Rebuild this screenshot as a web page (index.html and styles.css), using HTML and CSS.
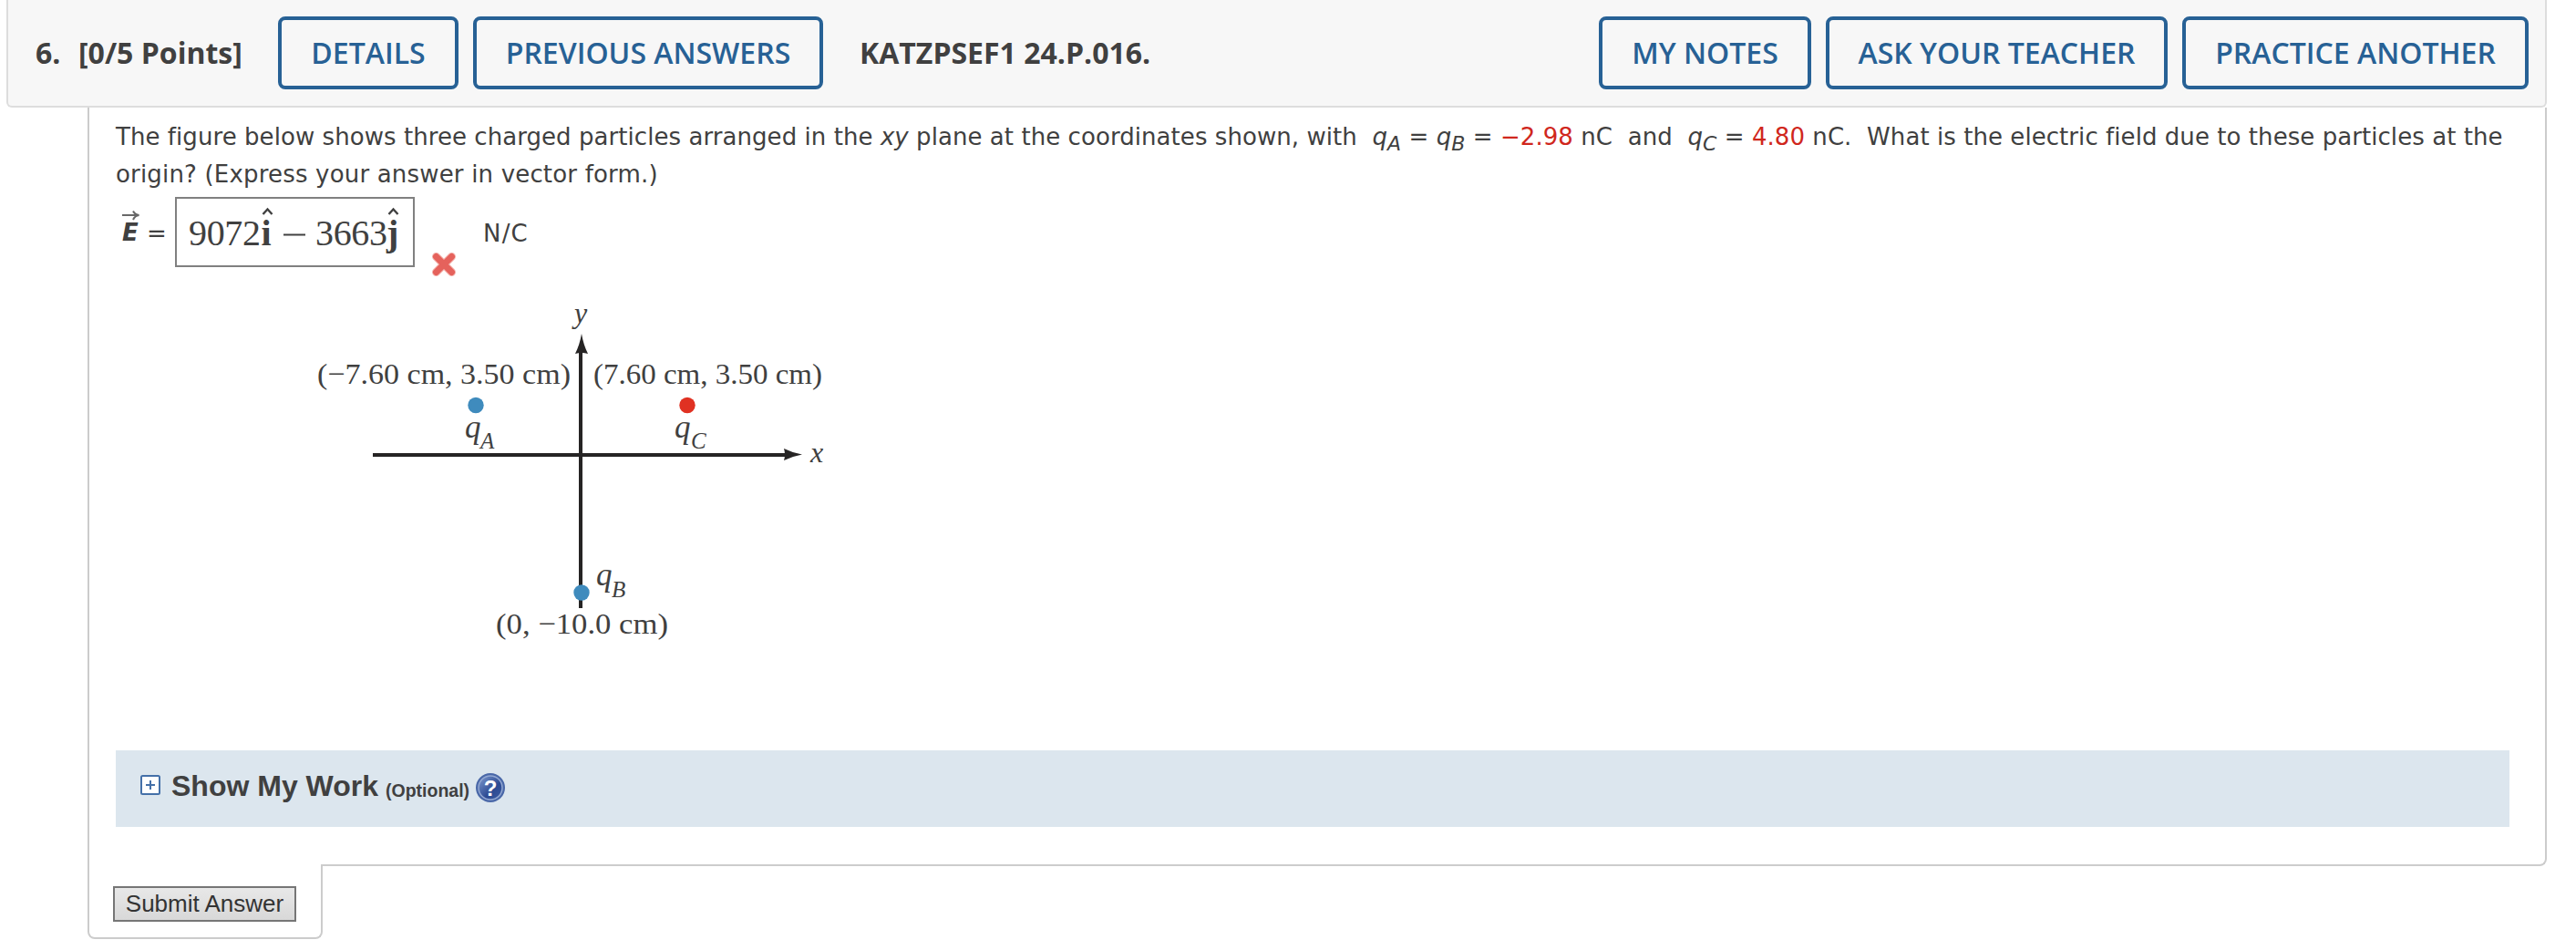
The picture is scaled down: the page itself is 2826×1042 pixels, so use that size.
FILE: index.html
```html
<!DOCTYPE html>
<html lang="en">
<head>
    <meta charset="UTF-8">
    <meta name="viewport" content="width=device-width, initial-scale=1.0">
    <title>Question 6</title>
    <link rel="stylesheet" href="styles.css">
</head>
<body>
    <div class="question">
        <!-- Header bar -->
        <header class="question-header">
            <span class="number">6.</span>
            <span class="points">[0/5 Points]</span>
            <button class="btn btn-details">DETAILS</button>
            <button class="btn btn-previous">PREVIOUS ANSWERS</button>
            <span class="code">KATZPSEF1 24.P.016.</span>
            <div class="header-right">
                <button class="btn btn-notes">MY NOTES</button>
                <button class="btn btn-ask">ASK YOUR TEACHER</button>
                <button class="btn btn-practice">PRACTICE ANOTHER</button>
            </div>
        </header>

        <!-- Question body -->
        <main class="question-body">
            <p class="prompt"><span class="line-one">The figure below shows three charged particles arranged in the <i>xy</i> plane at the coordinates shown, with &nbsp;<i>q<sub>A</sub></i> = <i>q<sub>B</sub></i> = <span class="value">−2.98</span> nC&nbsp; and &nbsp;<i>q<sub>C</sub></i> = <span class="value">4.80</span> nC.&nbsp; What is the electric field due to these particles at the</span><br><span class="line-two">origin? (Express your answer in vector form.)</span></p>

            <div class="answer-row">
                <svg class="vector" width="60" height="60" viewBox="130 218 60 60">
                    <path d="M134 236h16M146 231.500q2 4 6.500 4.500q-4.500 .5-6.500 5" fill="none" stroke="#686868" stroke-width="2"/>
                    <text class="vector-name" x="134" y="264">E</text>
                    <text class="vector-eq" x="161" y="265">=</text>
                </svg>
                <div class="answer-box">
                    <svg width="259" height="73" viewBox="194 218 259 73">
                        <g class="math">
                            <text x="207" y="269" textLength="79">9072</text>
                            <text class="unit" x="286.500" y="269">i</text>
                            <path d="M311 257.500h24" stroke="#404040" stroke-width="2"/>
                            <text x="346" y="269" textLength="79">3663</text>
                            <text class="unit" x="424" y="269">j</text>
                            <path d="M288.500 235l5-5.500 5 5.500M426.500 235l5-5.500 5 5.500" fill="none" stroke="#404040" stroke-width="2.400"/>
                        </g>
                    </svg>
                </div>
                <svg class="wrong" width="28" height="28" viewBox="0 0 28 28">
                    <path d="M5.500 5.500l17 17M22.500 5.500l-17 17" stroke="#f5b9b4" stroke-width="9" stroke-linecap="round"/>
                    <path d="M5.500 5.500l17 17M22.500 5.500l-17 17" stroke="#e5625c" stroke-width="7" stroke-linecap="round"/>
                </svg>
                <span class="units">N/C</span>
            </div>

            <!-- Particle diagram -->
            <svg class="figure" width="580" height="390" viewBox="340 320 580 390">
                <path d="M637 384V667M409 499H864" stroke="#262424" stroke-width="4" fill="none"/>
                <path d="M638 366q2 12 7 22q-7-2-14 0q5-10 7-22zM880 498.500q-11 2-20 6.500q2-6.500 0-13q9 4.500 20 6.500z" fill="#262424"/>
                <circle cx="522" cy="444.500" r="8.700" fill="#3f8bbd"/>
                <circle cx="754" cy="444.500" r="8.700" fill="#e03122"/>
                <circle cx="638" cy="650" r="8.700" fill="#3f8bbd"/>
                <text x="348" y="421" textLength="278" lengthAdjust="spacingAndGlyphs">(−7.60 cm, 3.50 cm)</text>
                <text x="651" y="421" textLength="251" lengthAdjust="spacingAndGlyphs">(7.60 cm, 3.50 cm)</text>
                <text x="544" y="695" textLength="189" lengthAdjust="spacingAndGlyphs">(0, −10.0 cm)</text>
                <g class="symbols">
                    <text x="630" y="354">y</text>
                    <text x="889" y="507">x</text>
                    <text class="charge" x="510" y="480">q</text>
                    <text class="charge" x="740" y="480">q</text>
                    <text class="charge" x="654" y="642">q</text>
                    <text class="small" x="527" y="492">A</text>
                    <text class="small" x="758" y="492">C</text>
                    <text class="small" x="671" y="655">B</text>
                </g>
            </svg>

            <div class="show-work">
                <svg class="expand" width="22" height="22" viewBox="0 0 22 22">
                    <rect x="1" y="1" width="20" height="20" rx="1.500" fill="#fff" stroke="#4470a8" stroke-width="2"/>
                    <path d="M6 11h10M11 6v10" stroke="#4470a8" stroke-width="2"/>
                </svg>
                <span class="work-title">Show My Work</span>
                <span class="optional">(Optional)</span>
                <svg class="help" width="32" height="32" viewBox="0 0 32 32">
                    <defs>
                        <linearGradient id="help-fill" x1="0" y1="0" x2="1" y2="1">
                            <stop offset="0" stop-color="#7f9bd0"/>
                            <stop offset="0.6" stop-color="#2c4a92"/>
                            <stop offset="1" stop-color="#3d5ca3"/>
                        </linearGradient>
                    </defs>
                    <circle cx="16" cy="16" r="16" fill="#4a68a8"/>
                    <circle cx="16" cy="16" r="13" fill="url(#help-fill)" stroke="#93a8d2" stroke-width="1.500"/>
                    <text x="16" y="24.500" text-anchor="middle">?</text>
                </svg>
            </div>
        </main>

        <div class="submit-tab">
            <button class="submit">Submit Answer</button>
        </div>
    </div>
</body>
</html>
```
FILE: styles.css
```css
* {
    box-sizing: border-box;
}

body {
    margin: 0;
    background-color: #fff;
    color: #404040;
    font-family: "DejaVu Sans", Verdana, sans-serif;
    font-size: 26px;
}

.question {
    width: 2787px;
    margin-left: 7px;
}

/* Header */
.question-header {
    display: flex;
    align-items: center;
    height: 118px;
    padding: 0 18px 0 30px;
    background-color: #f7f7f7;
    border: 2px solid #ddd;
    border-top: none;
    border-radius: 0 0 6px 6px;
    font: bold 32px "Open Sans", sans-serif;
}

.number,
.points,
.code {
    padding-bottom: 2px;
}

.number {
    width: 47px;
}

.points {
    width: 219px;
}

.btn {
    height: 80px;
    padding: 0 0 2px;
    background-color: transparent;
    border: 4px solid #276195;
    border-radius: 8px;
    color: #276195;
    font: 600 32px "Open Sans", sans-serif;
    white-space: nowrap;
}

.btn-details {
    width: 198px;
    margin-right: 16px;
}

.btn-previous {
    width: 384px;
    margin-right: 40px;
}

.header-right {
    display: flex;
    gap: 16px;
    margin-left: auto;
}

.btn-notes {
    width: 233px;
}

.btn-ask {
    width: 375px;
}

.btn-practice {
    width: 380px;
}

/* Body */
.question-body {
    height: 832px;
    margin-left: 89px;
    padding: 12px 39px 0 29px;
    border: 2px solid #ccc;
    border-top: none;
    border-radius: 0 0 8px 0;
}

.prompt {
    margin: 0;
    line-height: 41px;
    white-space: nowrap;
}

.line-one {
    letter-spacing: 0.06px;
}

.line-two {
    letter-spacing: 0.18px;
}

.prompt sub {
    font-size: 22px;
    line-height: 0;
    vertical-align: -6px;
}

.value {
    color: #d0271d;
}

.answer-row {
    display: flex;
    align-items: flex-start;
    height: 77px;
    margin-top: 4px;
}

.vector {
    margin: 2px 2px 0 3px;
}

.vector-name {
    font-size: 26px;
    font-weight: bold;
    font-style: italic;
}

.answer-box {
    width: 263px;
    height: 77px;
    border: 2px solid #808080;
}

.answer-box svg {
    display: block;
}

svg text {
    fill: #404040;
}

.math {
    font-family: "Liberation Serif", serif;
    font-size: 40px;
}

.unit {
    font-weight: bold;
}

.wrong {
    margin: 60px 0 0 18px;
}

.units {
    margin: 25px 0 0 29px;
    letter-spacing: 1.2px;
    line-height: 30px;
}

.figure {
    display: block;
    margin: 27px 0 0 213px;
    font-family: "Liberation Serif", serif;
    font-size: 32px;
}

.symbols {
    font-style: italic;
}

.charge {
    font-size: 35px;
}

.small {
    font-size: 25px;
}

/* Show my work */
.show-work {
    display: flex;
    align-items: flex-start;
    height: 84px;
    margin-top: 113px;
    padding: 25px 27px 0;
    background-color: #dce6ee;
    font-family: "Liberation Sans", Arial, sans-serif;
    font-weight: bold;
}

.expand {
    margin-top: 2px;
}

.work-title {
    margin: -1px 0 0 12px;
    font-size: 32px;
    line-height: 30px;
}

.optional {
    margin-left: 8px;
    font-size: 19.5px;
    line-height: 38px;
}

.help {
    margin-left: 7px;
    font-size: 24px;
}

.help text {
    fill: #fff;
}

/* Submit */
.submit-tab {
    width: 258px;
    height: 82px;
    margin: -2px 0 0 89px;
    padding: 24px 0 0 26px;
    background-color: #fff;
    border: 2px solid #ccc;
    border-top: none;
    border-radius: 0 0 8px 8px;
}

.submit {
    display: block;
    width: 201px;
    height: 39px;
    padding: 0;
    background: linear-gradient(#e8e8e8, #d8d8d8);
    border: 2px solid #767676;
    color: #333;
    font: 26px "Liberation Sans", Arial, sans-serif;
    white-space: nowrap;
}
```
